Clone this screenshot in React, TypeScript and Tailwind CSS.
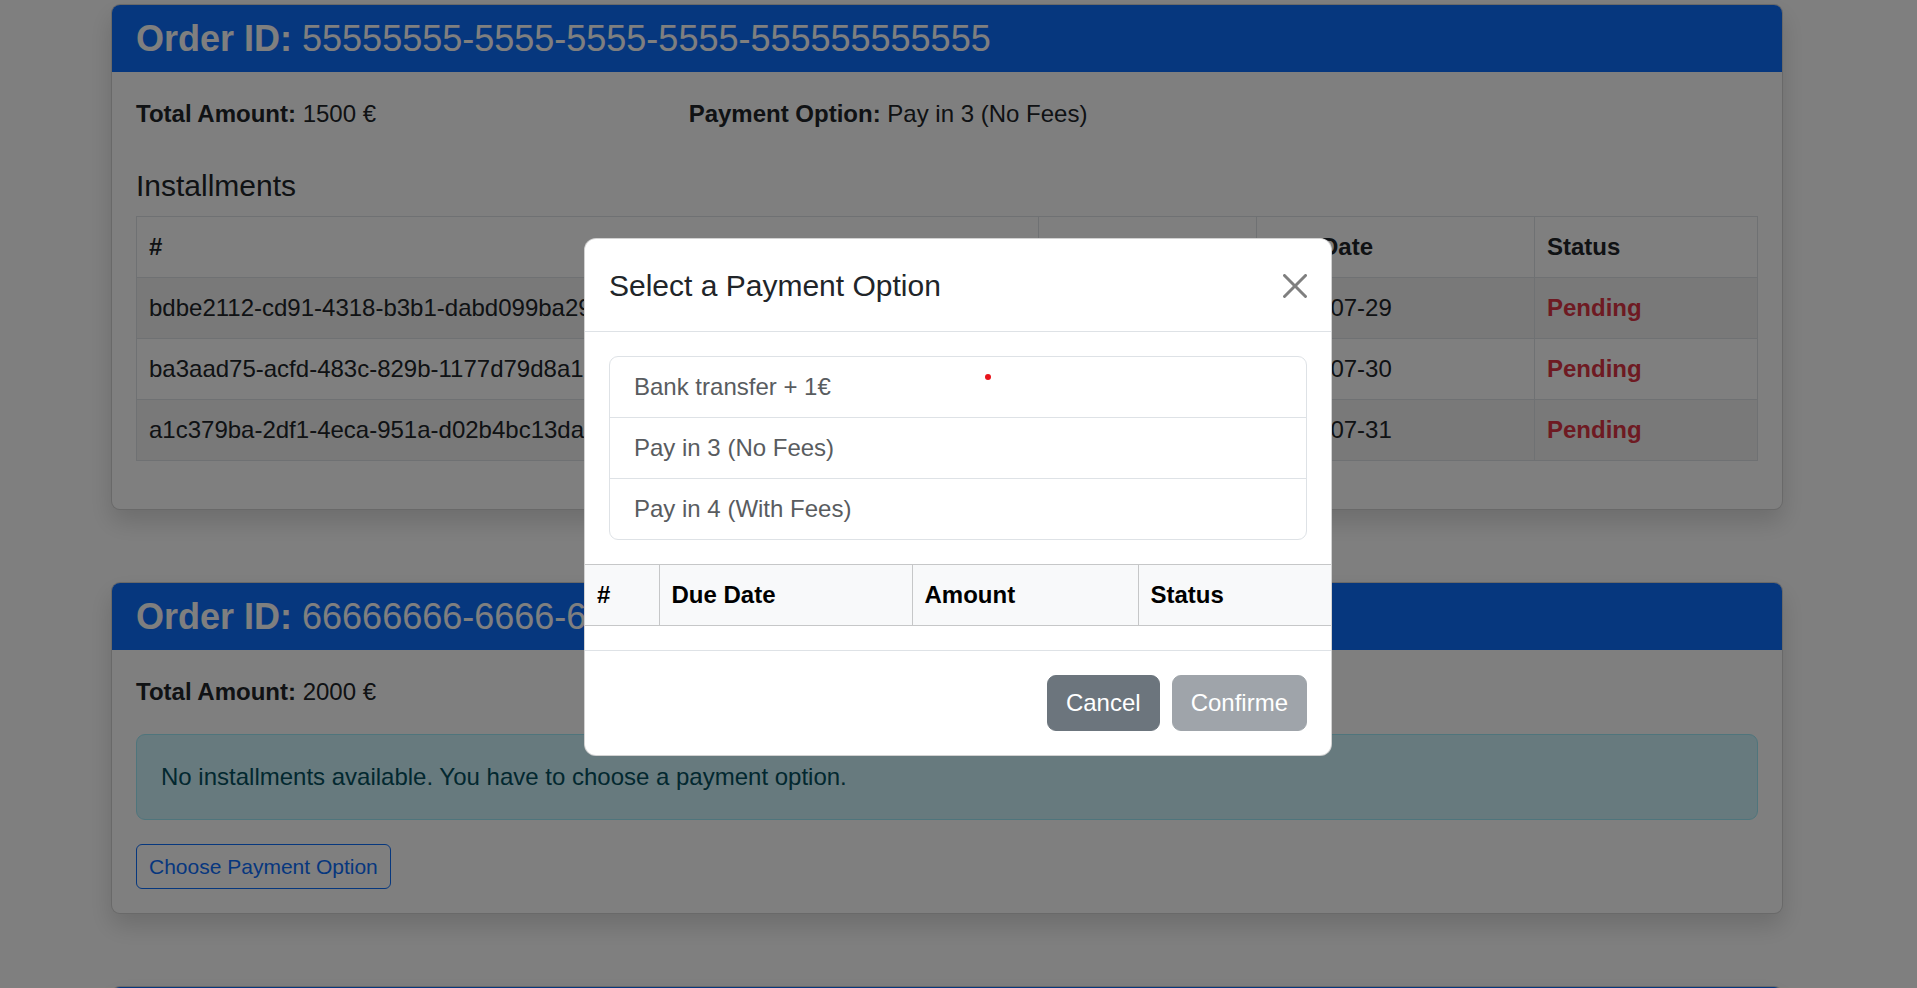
import React from 'react';

type Installment = {
  id: string;
  amount: string;
  dueDate: string;
  status: string;
};

const INSTALLMENTS: Installment[] = [
  { id: 'bdbe2112-cd91-4318-b3b1-dabd099ba29f', amount: '500 €', dueDate: '2024-07-29', status: 'Pending' },
  { id: 'ba3aad75-acfd-483c-829b-1177d79d8a1c', amount: '500 €', dueDate: '2024-07-30', status: 'Pending' },
  { id: 'a1c379ba-2df1-4eca-951a-d02b4bc13da4', amount: '500 €', dueDate: '2024-07-31', status: 'Pending' },
];

const PAYMENT_OPTIONS = ['Bank transfer + 1€', 'Pay in 3 (No Fees)', 'Pay in 4 (With Fees)'];

const CardHeader = ({ orderId }: { orderId?: string }) => (
  <div className="h-[67px] rounded-t-[8px] bg-[#0d6efd] px-[24px] py-[12px] text-[36px] leading-[43px] text-white">
    {orderId && (
      <>
        <span className="font-bold">Order ID:</span> {orderId}
      </>
    )}
  </div>
);

const OrderCard = ({ children, orderId }: { children?: React.ReactNode; orderId?: string }) => (
  <div className="mb-[72px] rounded-[9px] border border-black/[0.175] bg-white shadow-[0_12px_24px_rgba(0,0,0,0.15)]">
    <CardHeader orderId={orderId} />
    <div className="p-[24px]">{children}</div>
  </div>
);

const InstallmentsTable = () => (
  <table className="mb-[24px] w-full table-fixed border-collapse border border-[#dee2e6]">
    <colgroup>
      <col className="w-[902px]" />
      <col className="w-[218px]" />
      <col className="w-[278px]" />
      <col />
    </colgroup>
    <thead>
      <tr>
        {['#', 'Amount', 'Due Date', 'Status'].map((h) => (
          <th key={h} className="border border-[#dee2e6] p-[12px] text-left font-bold leading-[36px]">
            {h}
          </th>
        ))}
      </tr>
    </thead>
    <tbody>
      {INSTALLMENTS.map((row, i) => (
        <tr key={row.id} className={i % 2 === 0 ? 'bg-black/[0.05]' : ''}>
          <td className="border border-[#dee2e6] p-[12px] leading-[36px]">{row.id}</td>
          <td className="border border-[#dee2e6] p-[12px] leading-[36px]">{row.amount}</td>
          <td className="border border-[#dee2e6] p-[12px] leading-[36px]">{row.dueDate}</td>
          <td className="border border-[#dee2e6] p-[12px] font-bold leading-[36px] text-[#dc3545]">{row.status}</td>
        </tr>
      ))}
    </tbody>
  </table>
);

const PaymentModal = () => (
  <div className="absolute inset-0 flex items-start justify-start pl-[584px] pt-[238px]">
    <div className="w-[748px] rounded-[12px] border border-black/[0.175] bg-white text-[#212529]">
      <div className="flex items-center justify-between border-b border-[#dee2e6] p-[24px] pb-[23px]">
        <h5 className="text-[30px] leading-[45px]">Select a Payment Option</h5>
        <svg viewBox="0 0 16 16" className="h-[24px] w-[24px]" fill="#000" fillOpacity={0.5}>
          <path d="M.293.293a1 1 0 0 1 1.414 0L8 6.586 14.293.293a1 1 0 1 1 1.414 1.414L9.414 8l6.293 6.293a1 1 0 0 1-1.414 1.414L8 9.414l-6.293 6.293a1 1 0 0 1-1.414-1.414L6.586 8 .293 1.707a1 1 0 0 1 0-1.414" />
        </svg>
      </div>

      <div className="pb-[24px] pt-[24px]">
        <ul className="mx-[24px] mb-[24px] rounded-[9px] border border-[#dee2e6]">
          {PAYMENT_OPTIONS.map((opt, i) => (
            <li
              key={opt}
              className={
                'px-[24px] py-[12px] leading-[36px] text-[#595c5f] ' +
                (i < PAYMENT_OPTIONS.length - 1 ? 'border-b border-[#dee2e6]' : '')
              }
            >
              {opt}
            </li>
          ))}
        </ul>

        <table className="w-full table-fixed border-collapse">
          <colgroup>
            <col className="w-[74px]" />
            <col className="w-[253px]" />
            <col className="w-[226px]" />
            <col />
          </colgroup>
          <thead>
            <tr className="bg-[#f8f9fa] text-black">
              {['#', 'Due Date', 'Amount', 'Status'].map((h) => (
                <th key={h} className="border border-[#c6c7c8] p-[12px] text-left font-bold leading-[36px] first:border-l-0 last:border-r-0">
                  {h}
                </th>
              ))}
            </tr>
          </thead>
          <tbody />
        </table>
      </div>

      <div className="flex justify-end border-t border-[#dee2e6] p-[18px]">
        <button className="m-[6px] rounded-[9px] border border-[#6c757d] bg-[#6c757d] px-[18px] py-[9px] leading-[36px] text-white">
          Cancel
        </button>
        <button className="m-[6px] rounded-[9px] border border-[#6c757d] bg-[#6c757d] px-[18px] py-[9px] leading-[36px] text-white opacity-65">
          Confirme
        </button>
      </div>
    </div>
  </div>
);

export default function App() {
  return (
    <div className="relative h-[988px] w-full overflow-hidden bg-white font-['Liberation_Sans',Arial,sans-serif] text-[24px] text-[#212529]">
      <div className="ml-[111px] w-[1672px] pt-[4px]">
        <OrderCard orderId="55555555-5555-5555-5555-555555555555">
          <div className="mb-[36px] grid grid-cols-3 gap-x-[36px] leading-[36px]">
            <div>
              <span className="font-bold">Total Amount:</span> 1500 €
            </div>
            <div>
              <span className="font-bold">Payment Option:</span> Pay in 3 (No Fees)
            </div>
          </div>
          <h5 className="mb-[12px] text-[30px] leading-[36px]">Installments</h5>
          <InstallmentsTable />
        </OrderCard>

        <OrderCard orderId="66666666-6666-6666-6666-666666666666">
          <div className="mb-[24px] grid grid-cols-3 gap-x-[36px] leading-[36px]">
            <div>
              <span className="font-bold">Total Amount:</span> 2000 €
            </div>
          </div>
          <div className="mb-[24px] rounded-[9px] border border-[#9eeaf9] bg-[#cff4fc] p-[24px] leading-[36px] text-[#055160]">
            No installments available. You have to choose a payment option.
          </div>
          <button className="rounded-[6px] border border-[#0d6efd] px-[12px] py-[6px] text-[21px] leading-[31px] text-[#0d6efd]">
            Choose Payment Option
          </button>
        </OrderCard>

        <OrderCard />
      </div>

      <div className="absolute inset-0 bg-black/50" />
      <PaymentModal />
      <div className="absolute left-[985px] top-[374px] h-[6px] w-[6px] rounded-full bg-[#e8141c]" />
    </div>
  );
}
